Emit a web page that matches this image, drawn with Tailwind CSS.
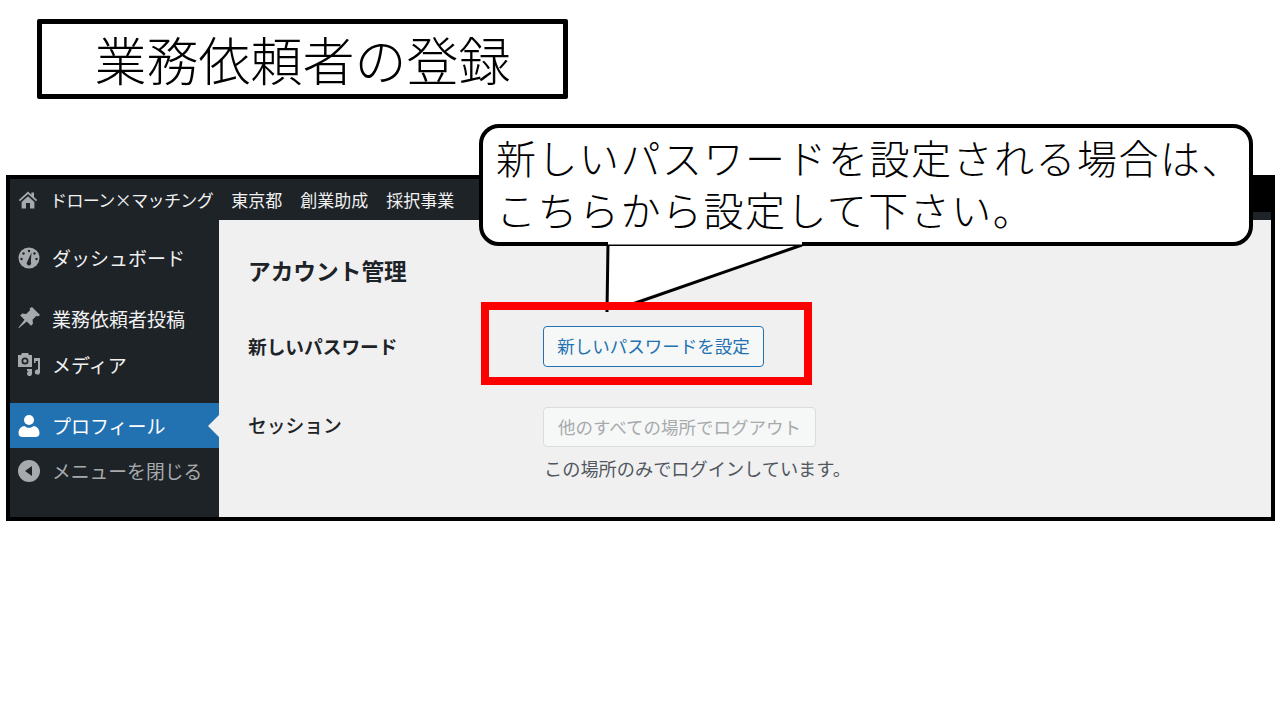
<!DOCTYPE html>
<html lang="ja">
<head>
<meta charset="UTF-8">
<title>業務依頼者の登録</title>
<script src="https://cdn.jsdelivr.net/npm/@tailwindcss/browser@4"></script>
</head>
<body class="bg-white font-['Noto_Sans_CJK_JP','Noto_Sans',sans-serif] w-[1280px] h-[720px] overflow-hidden relative">

  <!-- slide title -->
  <div class="ml-[37px] mt-[19px] w-[531px] h-[80px] border-[5px] border-black rounded-[2px] flex items-center justify-center text-[52px] font-light leading-none text-black whitespace-nowrap">業務依頼者の登録</div>

  <!-- screenshot of the account page -->
  <div class="ml-[6px] mt-[76px] w-[1269px] h-[346px] border-4 border-black flex flex-col overflow-hidden bg-[#f0f0f1]">
    <div class="h-[41px] shrink-0 bg-[#1d2327] flex items-center text-[#f0f0f1] text-[17px] leading-none whitespace-nowrap">
      <svg class="ml-[8px] w-[20px] h-[20px] mt-px" viewBox="0 0 20 20"><path fill="#a7aaad" d="M10 1.5 0.8 10l1.2 1.2L10 4l8 7.2 1.2-1.2-3.2-3V2.5h-2.6v2.2zM3.6 12 10 6.2l6.4 5.8v6.5H12v-5.5H8v5.5H3.6z"/></svg>
      <span class="ml-[12px] tracking-[-0.6px]">ドローン×マッチング</span>
      <span class="ml-[18px]">東京都</span>
      <span class="ml-[18px]">創業助成</span>
      <span class="ml-[18px]">採択事業</span>
      <div class="ml-auto w-[20px] h-[33px] bg-black self-start"></div>
    </div>
    <div class="flex flex-1 min-h-0">
      <aside class="w-[209px] shrink-0 bg-[#1d2327] pt-[15px] text-[19px] leading-none text-[#f0f0f1] whitespace-nowrap">
        <div class="h-[45px] flex items-center">
          <svg class="ml-[8px] w-[22px] h-[22px]" viewBox="0 0 22 22"><circle cx="11" cy="11" r="10.5" fill="#a7aaad"/><circle cx="11" cy="4" r="1.2" fill="#1d2327"/><circle cx="5.5" cy="6.5" r="1.2" fill="#1d2327"/><circle cx="16.5" cy="6.5" r="1.2" fill="#1d2327"/><circle cx="3.5" cy="12" r="1.2" fill="#1d2327"/><circle cx="18.5" cy="12" r="1.2" fill="#1d2327"/><path fill="#1d2327" d="M13.5 5.5 12.8 15a2.2 2.2 0 1 1-3.6-.2z"/></svg>
          <span class="ml-[12px]">ダッシュボード</span>
        </div>
        <div class="mt-[15px] h-[46px] flex items-center">
          <svg class="ml-[7px] w-[24px] h-[24px]" viewBox="0 0 24 24"><path fill="#a7aaad" d="M15 1l8 8-2 1.5-1.5-.7-4 4 .5 4-2 2-4.2-4.3L2 22l-.5-.5 6-7.7-4.300-4.200 2-2 4 .5 4-4-.7-1.500z"/></svg>
          <span class="ml-[11px]">業務依頼者投稿</span>
        </div>
        <div class="h-[46px] flex items-center">
          <svg class="ml-[7px] w-[24px] h-[24px]" viewBox="0 0 24 24"><path fill="#a7aaad" fill-rule="evenodd" d="M1 3h3l1-2h6l1 2h3v12H1zM8 5.500a3.500 3.500 0 1 0 0 7 3.500 3.500 0 0 0 0-7z"/><circle cx="8" cy="9" r="1.800" fill="#a7aaad"/><path fill="#a7aaad" d="M17 6h6v14a2.600 2.600 0 1 1-2-2.500V9h-2.500v2H17zM10 17h5v4.500a2.500 2.500 0 1 1-2-2.400V19h-3z"/></svg>
          <span class="ml-[11px]">メディア</span>
        </div>
        <div class="relative mt-[16px] h-[45px] bg-[#2271b1] flex items-center text-white">
          <svg class="ml-[8px] w-[22px] h-[24px]" viewBox="0 0 22 24"><circle cx="11" cy="6" r="5" fill="#fff"/><path fill="#fff" d="M0.500 19c0-4 3-7 6-7 1 1 2.500 1.800 4.500 1.800S14.500 13 15.500 12c3 0 6 3 6 7 0 3-2 4-4 4H4.500c-2 0-4-1-4-4z"/></svg>
          <span class="ml-[12px]">プロフィール</span>
          <div class="absolute right-0 top-[12px] w-0 h-0 border-y-[11px] border-y-transparent border-r-[11px] border-r-[#f0f0f1]"></div>
        </div>
        <div class="h-[46px] flex items-center text-[#a7aaad] text-[18.800px]">
          <svg class="ml-[8px] w-[22px] h-[22px]" viewBox="0 0 22 22"><circle cx="11" cy="11" r="11" fill="#a7aaad"/><path fill="#1d2327" d="M14 6v10l-7-5z"/></svg>
          <span class="ml-[12px]">メニューを閉じる</span>
        </div>
      </aside>
      <main class="flex-1 pl-[29px] text-[#1d2327] leading-none whitespace-nowrap">
        <h2 class="mt-[40px] text-[22.700px] font-bold">アカウント管理</h2>
        <div class="mt-[43px] flex items-center h-[41px]">
          <div class="w-[295px] text-[18.700px] font-semibold">新しいパスワード</div>
          <button class="w-[221px] h-[41px] rounded-[4px] border border-[#2271b1] bg-[#f6f7f7] text-[#2271b1] text-[17.500px]">新しいパスワードを設定</button>
        </div>
        <div class="mt-[40px] flex">
          <div class="w-[295px] text-[18.800px] font-medium pt-[9px]">セッション</div>
          <div>
            <button class="w-[273px] h-[40px] rounded-[4px] border border-[#dcdcde] bg-[#f6f7f7] text-[#a7aaad] text-[17.500px]">他のすべての場所でログアウト</button>
            <p class="mt-[12px] ml-px text-[18.200px] text-[#50575e]">この場所のみでログインしています。</p>
          </div>
        </div>
      </main>
    </div>
  </div>

  <!-- annotation: callout tail, bubble and red frame -->
  <svg class="absolute left-[590px] top-[238px]" width="230" height="80" viewBox="0 0 230 80">
    <path d="M18 4 17 72 212 6V0H18z" fill="#fff"/>
    <path d="M18 6 17 74M212 7 34 69" fill="none" stroke="#000" stroke-width="3"/>
  </svg>
  <div class="absolute left-[479px] top-[124px] w-[774px] h-[122px] bg-white border-4 border-black rounded-[20px] pl-[13px] pt-[3px] text-[40px] leading-[52px] tracking-[1.500px] font-light text-black whitespace-nowrap">新しいパスワードを設定される場合は、<br>こちらから設定して下さい。</div>
  <svg class="absolute left-[598px] top-[238px]" width="210" height="10" viewBox="0 0 210 10"><path d="M10 4H204" stroke="#fff" stroke-width="5"/></svg>
  <div class="absolute left-[481px] top-[302px] w-[331px] h-[83px] border-[8px] border-[#ff0000]"></div>
</body>
</html>
